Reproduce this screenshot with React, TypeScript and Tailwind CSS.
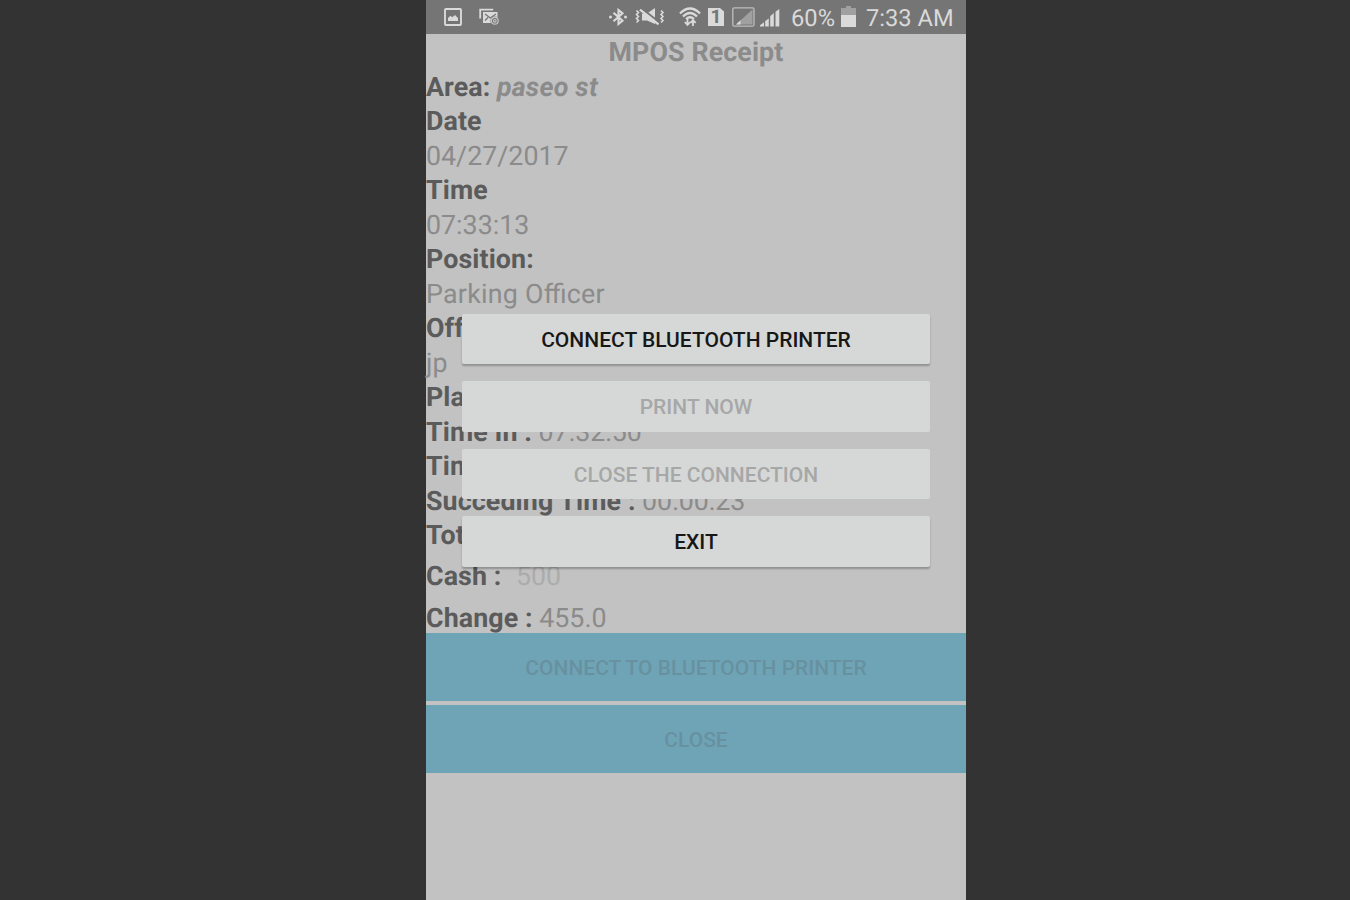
import type { ReactNode } from 'react';

const INK = '#dadada';

function StatusBar() {
  return (
    <header className="flex h-[34px] shrink-0 items-center bg-[#757575] text-[23.7px] leading-[34px] text-[#dadada]">
      <svg className="ml-[18px] h-[18px] w-[18px]" viewBox="0 0 18 18">
        <rect x="1" y="1" width="16" height="16" rx="1" fill="none" stroke={INK} strokeWidth="1.9" />
        <path d="M4 13v-3L6.5 7.8l1.7 1.4L11 7l3 3v3z" fill={INK} />
      </svg>
      <svg className="ml-[17px] h-[18px] w-[20px]" viewBox="0 0 20 18">
        <path d="M1.2 10.5V1.7h13" fill="none" stroke={INK} strokeWidth="1.8" />
        <path d="M4 4h14.5v11H4z" fill={INK} />
        <path d="M6 6l5.3 4L17 6M6 12.5l3-3" fill="none" stroke="#757575" strokeWidth="1.3" />
        <circle cx="15.8" cy="12.8" r="4.4" fill="#757575" />
        <circle cx="15.8" cy="12.8" r="3.4" fill="none" stroke="#c4c4c4" strokeWidth="1.2" />
        <circle cx="15.8" cy="12.8" r="1.3" fill="none" stroke="#c4c4c4" strokeWidth="1.2" />
      </svg>
      <svg className="ml-[110px] h-[18px] w-[18px]" viewBox="0 0 18 18">
        <path d="M4.5 4.7l9 8.1L9.5 16V2l4 3.2-9 8.1" fill="none" stroke={INK} strokeWidth="2.1" />
        <circle cx="1.5" cy="9" r="1.5" fill={INK} />
        <circle cx="16.5" cy="9" r="1.5" fill={INK} />
      </svg>
      <svg className="ml-[8px] h-[18px] w-[30px]" viewBox="0 0 30 18">
        <path d="M1.5 2.5l2 2-2 2 2 2-2 2 2 2-2 2M26 2.5l2 2-2 2 2 2-2 2 2 2-2 2" fill="none" stroke={INK} strokeWidth="1.6" />
        <path d="M7 5.5h5L20 0v16l-8-3.5H7z" fill={INK} />
        <path d="M6 0l18 14" stroke="#757575" strokeWidth="2" />
        <path d="M5 1.7l18.5 14.6" stroke={INK} strokeWidth="2.3" />
      </svg>
      <svg className="ml-[13.5px] mt-[-1px] h-[20px] w-[22px]" viewBox="0 0 22 20">
        <path d="M1 6.5Q11-3.5 21 6.5M4 9.5Q11 2.5 18 9.5M7 12Q11 8.5 15 12" fill="none" stroke={INK} strokeWidth="2.3" />
        <path d="M8.5 12v6M5.8 15l2.7 3 2.7-3M14 19v-6M11.5 15.8L14 13l2.7 2.8" fill="none" stroke={INK} strokeWidth="1.8" />
      </svg>
      <div className="ml-[7.5px] mr-px flex h-[18px] w-[16px] items-center justify-center bg-[#dadada] text-[19px] font-bold leading-[18px] text-[#757575] [clip-path:polygon(0_0,75%_0,100%_20%,100%_100%,0_100%)]">1</div>
      <svg className="ml-[7px] h-[20px] w-[23px]" viewBox="0 0 23 20">
        <rect x=".8" y=".8" width="21.2" height="18.4" rx="1.5" fill="none" stroke="#bebebe" strokeWidth="1.3" />
        <path d="M4 17.5L20.5 2.5v15z" fill="#a0a0a0" />
        <path d="M4 17.5l4.5-4.2v4.2z" fill={INK} />
      </svg>
      <svg className="ml-[5px] mt-px h-[18px] w-[20px]" viewBox="0 0 20 18">
        <path d="M0 17.5v-1.3l4-3v4.3zM5.2 17.5v-5.4l3.6-2.7v8.1zM10.2 17.5V7.2L13.8 4v13.5zM15.5 17.5V2.7L19.3 0v17.5z" fill={INK} />
      </svg>
      <span className="ml-[11px] w-[45px] whitespace-nowrap pt-px">60%</span>
      <svg className="ml-[5px] mt-[-1px] h-[21px] w-[15px]" viewBox="0 0 15 21">
        <path d="M0 2h5V0h5v2h5v7.5H0z" fill="#a0a0a0" />
        <path d="M0 9h15v12H0z" fill={INK} />
      </svg>
      <span className="ml-[10px] whitespace-nowrap pt-px">7:33 AM</span>
    </header>
  );
}

function Row({ label, children }: { label?: string; children?: ReactNode }) {
  return (
    <div className="flex h-[34.5px] items-center gap-[6.5px] whitespace-pre">
      {label && <span className="font-bold tracking-[0.1px] text-[#5b5b5b]">{label}</span>}
      {children}
    </div>
  );
}

function DialogButton({ children, disabled = false }: { children: string; disabled?: boolean }) {
  return (
    <button
      disabled={disabled}
      className="flex h-[50.5px] w-full items-center justify-center rounded-[2px] bg-[#d6d8d7] pt-[3px] text-[21px] font-medium text-[#171717] shadow-[0_2px_2px_rgba(0,0,0,0.26)] disabled:text-[#a6a7a7] disabled:shadow-none"
    >
      {children}
    </button>
  );
}

export default function App() {
  return (
    <div className="flex h-[900px] w-[1350px] justify-center overflow-hidden bg-[#333333] pl-[42px] font-[Roboto,sans-serif] [text-rendering:geometricPrecision]">
      <main className="relative flex h-[900px] w-[540px] flex-col bg-[#c2c2c2]">
        <StatusBar />
        <section className="h-[599.3px] shrink-0 pt-[1px] text-[26.8px] leading-[34.5px] text-[#8b8b8b]">
          <h1 className="h-[34.5px] text-center font-bold tracking-[0.1px]">MPOS Receipt</h1>
          <Row label="Area:"><em className="font-bold tracking-[0.2px]">paseo st</em></Row>
          <Row label="Date" />
          <Row>04/27/2017</Row>
          <Row label="Time" />
          <Row>07:33:13</Row>
          <Row label="Position:" />
          <Row><span className="tracking-[0.25px] [font-feature-settings:'liga']">Parking Officer</span></Row>
          <Row label="Officer:" />
          <Row>jp</Row>
          <Row label="Plate :" />
          <Row label="Time In :">07:32:50</Row>
          <Row label="Time Out :" />
          <Row label="Succeding Time :">00:00:23</Row>
          <Row label="Total :" />
          <div className="flex h-[48px] items-center gap-[14.5px]">
            <span className="font-bold tracking-[0.1px] text-[#5b5b5b]">Cash :</span>
            <span className="text-[#acacac]">500</span>
          </div>
          <Row label="Change :">455.0</Row>
        </section>
        <div className="flex flex-col gap-[4px] text-[21px] font-medium text-[#6891a0]">
          <button className="h-[67.7px] bg-[#6fa4b7] pt-[4px]">CONNECT TO BLUETOOTH PRINTER</button>
          <button className="h-[67.7px] bg-[#6fa4b7] pt-[4px]">CLOSE</button>
        </div>
        <div className="absolute left-[36px] top-[313.6px] flex w-[468px] flex-col gap-[17px]">
          <DialogButton>CONNECT BLUETOOTH PRINTER</DialogButton>
          <DialogButton disabled>PRINT NOW</DialogButton>
          <DialogButton disabled>CLOSE THE CONNECTION</DialogButton>
          <DialogButton>EXIT</DialogButton>
        </div>
      </main>
    </div>
  );
}
